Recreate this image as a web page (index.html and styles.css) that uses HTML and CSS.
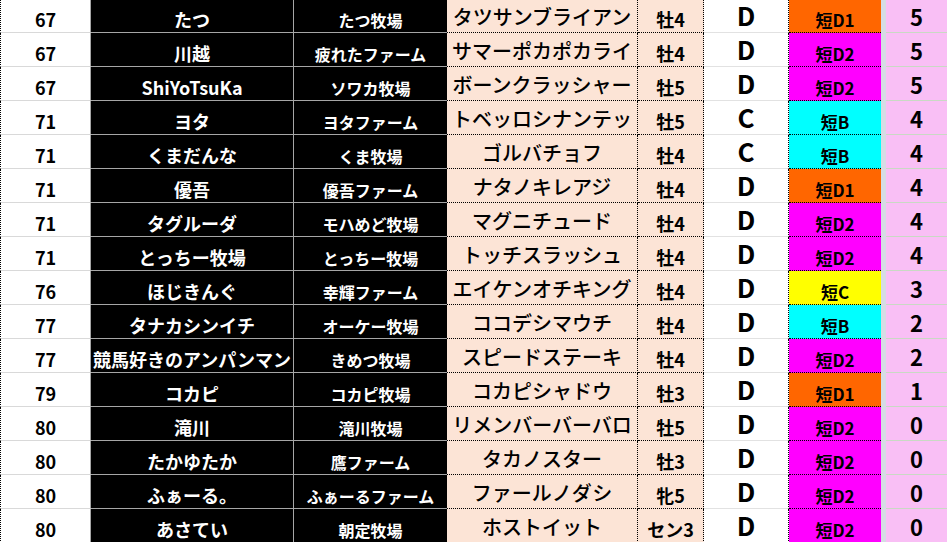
FILE: index.html
```html
<!DOCTYPE html>
<html lang="ja">
<head>
<meta charset="utf-8">
<title>ランキング</title>
<link rel="stylesheet" href="styles.css">
</head>
<body>
<div class="sheet">
  <div class="row"><div class="c a">67</div><div class="c b">たつ</div><div class="c cc">たつ牧場</div><div class="c d">タツサンブライアン</div><div class="c e">牡4</div><div class="c f">D</div><div class="c g orange">短D1</div><div class="c s"></div><div class="c h">5</div></div>
  <div class="row"><div class="c a">67</div><div class="c b">川越</div><div class="c cc">疲れたファーム</div><div class="c d">サマーポカポカライ</div><div class="c e">牡4</div><div class="c f">D</div><div class="c g magenta">短D2</div><div class="c s"></div><div class="c h">5</div></div>
  <div class="row"><div class="c a">67</div><div class="c b">ShiYoTsuKa</div><div class="c cc">ソワカ牧場</div><div class="c d">ボーンクラッシャー</div><div class="c e">牡5</div><div class="c f">D</div><div class="c g magenta">短D2</div><div class="c s"></div><div class="c h">5</div></div>
  <div class="row"><div class="c a">71</div><div class="c b">ヨタ</div><div class="c cc">ヨタファーム</div><div class="c d">トベッロシナンテッ</div><div class="c e">牡5</div><div class="c f">C</div><div class="c g cyan">短B</div><div class="c s"></div><div class="c h">4</div></div>
  <div class="row"><div class="c a">71</div><div class="c b">くまだんな</div><div class="c cc">くま牧場</div><div class="c d">ゴルバチョフ</div><div class="c e">牡4</div><div class="c f">C</div><div class="c g cyan">短B</div><div class="c s"></div><div class="c h">4</div></div>
  <div class="row"><div class="c a">71</div><div class="c b">優吾</div><div class="c cc">優吾ファーム</div><div class="c d">ナタノキレアジ</div><div class="c e">牡4</div><div class="c f">D</div><div class="c g orange">短D1</div><div class="c s"></div><div class="c h">4</div></div>
  <div class="row"><div class="c a">71</div><div class="c b">タグルーダ</div><div class="c cc">モハめど牧場</div><div class="c d">マグニチュード</div><div class="c e">牡4</div><div class="c f">D</div><div class="c g magenta">短D2</div><div class="c s"></div><div class="c h">4</div></div>
  <div class="row"><div class="c a">71</div><div class="c b">とっちー牧場</div><div class="c cc">とっちー牧場</div><div class="c d">トッチスラッシュ</div><div class="c e">牡4</div><div class="c f">D</div><div class="c g magenta">短D2</div><div class="c s"></div><div class="c h">4</div></div>
  <div class="row"><div class="c a">76</div><div class="c b">ほじきんぐ</div><div class="c cc">幸輝ファーム</div><div class="c d">エイケンオチキング</div><div class="c e">牡4</div><div class="c f">D</div><div class="c g yellow">短C</div><div class="c s"></div><div class="c h">3</div></div>
  <div class="row"><div class="c a">77</div><div class="c b">タナカシンイチ</div><div class="c cc">オーケー牧場</div><div class="c d">ココデシマウチ</div><div class="c e">牡4</div><div class="c f">D</div><div class="c g cyan">短B</div><div class="c s"></div><div class="c h">2</div></div>
  <div class="row"><div class="c a">77</div><div class="c b">競馬好きのアンパンマン</div><div class="c cc">きめつ牧場</div><div class="c d">スピードステーキ</div><div class="c e">牡4</div><div class="c f">D</div><div class="c g magenta">短D2</div><div class="c s"></div><div class="c h">2</div></div>
  <div class="row"><div class="c a">79</div><div class="c b">コカピ</div><div class="c cc">コカピ牧場</div><div class="c d">コカピシャドウ</div><div class="c e">牡3</div><div class="c f">D</div><div class="c g orange">短D1</div><div class="c s"></div><div class="c h">1</div></div>
  <div class="row"><div class="c a">80</div><div class="c b">滝川</div><div class="c cc">滝川牧場</div><div class="c d">リメンバーバーバロ</div><div class="c e">牡5</div><div class="c f">D</div><div class="c g magenta">短D2</div><div class="c s"></div><div class="c h">0</div></div>
  <div class="row"><div class="c a">80</div><div class="c b">たかゆたか</div><div class="c cc">鷹ファーム</div><div class="c d">タカノスター</div><div class="c e">牡3</div><div class="c f">D</div><div class="c g magenta">短D2</div><div class="c s"></div><div class="c h">0</div></div>
  <div class="row"><div class="c a">80</div><div class="c b">ふぁーる。</div><div class="c cc">ふぁーるファーム</div><div class="c d">ファールノダシ</div><div class="c e">牝5</div><div class="c f">D</div><div class="c g magenta">短D2</div><div class="c s"></div><div class="c h">0</div></div>
  <div class="row"><div class="c a">80</div><div class="c b">あさてい</div><div class="c cc">朝定牧場</div><div class="c d">ホストイット</div><div class="c e">セン3</div><div class="c f">D</div><div class="c g magenta">短D2</div><div class="c s"></div><div class="c h">0</div></div>
</div>
</body>
</html>
```

FILE: styles.css
```css
html, body {
  margin: 0;
  padding: 0;
  background: #ffffff;
  overflow: hidden;
}

.sheet {
  margin-top: -1px;
  display: flex;
  flex-direction: column;
  font-family: "Noto Sans CJK JP", "Noto Sans", sans-serif;
  font-weight: 700;
}

.row {
  display: grid;
  grid-template-columns: 91px 203px 153px 191px 66px 85px 92px 5px 61px;
  height: 34px;
}

.c {
  box-sizing: border-box;
  display: flex;
  justify-content: center;
  align-items: flex-end;
  white-space: nowrap;
  overflow: hidden;
  line-height: 1;
}

.a {
  border-left: 1px dotted #000;
  border-right: 1px solid #a6a6a6;
  border-bottom: 1px solid #d9d9d9;
  font-size: 18px;
  color: #000;
  padding-bottom: 4px;
}

.b {
  background: #000;
  color: #fff;
  border-right: 1px solid #a6a6a6;
  border-bottom: 1px solid #a6a6a6;
  font-size: 18px;
  padding-bottom: 4px;
}

.cc {
  background: #000;
  color: #fff;
  border-bottom: 1px solid #a6a6a6;
  font-size: 16px;
  padding-bottom: 4px;
}

.d {
  background: #fce4d6;
  color: #000;
  border-right: 1px dotted #000;
  border-bottom: 1px dotted #000;
  font-size: 20px;
  font-weight: 500;
  padding-bottom: 5px;
}

.e {
  background: #fce4d6;
  color: #000;
  border-right: 1px dotted #000;
  border-bottom: 1px dotted #000;
  font-size: 18px;
  padding-bottom: 4px;
}

.f {
  background: #fff;
  color: #000;
  border-right: 1px dotted #000;
  border-bottom: 1px solid #e2e2e2;
  font-size: 26px;
  align-items: flex-start;
  padding-top: 3px;
  overflow: visible;
}

.g {
  color: #000;
  border-bottom: 1px dotted #000;
  font-size: 17px;
  padding-bottom: 4px;
}

.orange { background: #ff6600; }
.magenta { background: #ff00ff; }
.cyan { background: #00ffff; }
.yellow { background: #ffff00; }

.s {
  background: #d6dce4;
}

.h {
  background: #f9bff5;
  color: #000;
  border-bottom: 1px solid #c9d9c4;
  font-size: 22px;
  padding-bottom: 5px;
}
```
